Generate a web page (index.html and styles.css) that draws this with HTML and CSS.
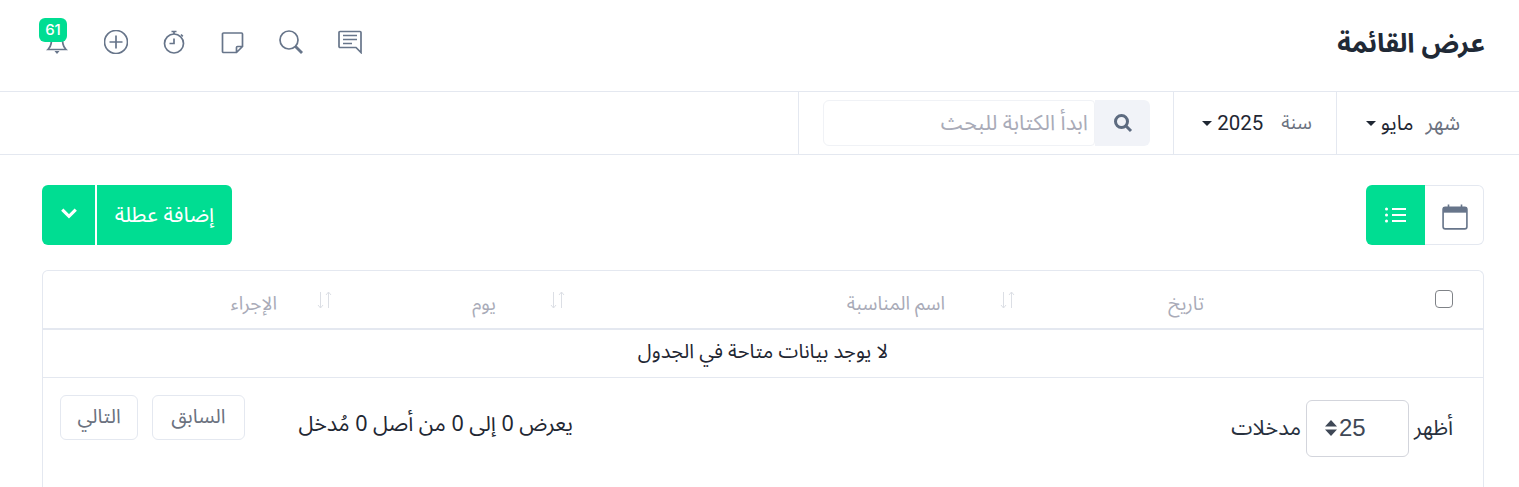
FILE: index.html
```html
<!DOCTYPE html>
<html lang="ar" dir="rtl">
<head>
    <meta charset="UTF-8">
    <meta name="viewport" content="width=device-width, initial-scale=1.0">
    <title>عرض القائمة</title>
    <link rel="stylesheet" href="styles.css">
</head>
<body>
    <header class="top-bar">
        <h1 class="page-title">عرض القائمة</h1>
        <div class="top-icons">
            <svg class="top-icon" viewBox="0 0 24 24"><path d="M2 1.500h20a1 1 0 0 1 1 1v20l-5-5H2a1 1 0 0 1-1-1v-14a1 1 0 0 1 1-1zM5 5.500h14M5 9.500h14M5 13.500h9"/></svg>
            <svg class="top-icon" viewBox="0 0 24 24"><circle cx="10" cy="10" r="9"/><path d="M16.500 16.500l6.500 6.500" class="thick"/></svg>
            <svg class="top-icon" viewBox="0 0 24 24"><path d="M2.500 3h18a1 1 0 0 1 1 1v12.500l-6 6h-13a1 1 0 0 1-1-1V4a1 1 0 0 1 1-1zM21.500 16.500h-5a1 1 0 0 0-1 1v5"/></svg>
            <svg class="top-icon" viewBox="0 0 24 24"><circle cx="12" cy="13.500" r="9.500"/><path d="M9.500 1.500h5M12 1.500V4M19 4.500l1.800 1.800M12 8.500v5H7.500"/></svg>
            <svg class="top-icon" viewBox="0 0 24 24"><circle cx="12" cy="12" r="11.500"/><path d="M12 5.500v13M5.500 12h13"/></svg>
            <span class="bell">
                <svg class="top-icon" viewBox="0 0 24 24"><path d="M7 8l-1 6q-.5 3-3 5.500h18q-2.500-2.500-3-5.500l-1-6"/><path class="solid" d="M9.500 21h5L12 24z"/></svg>
                <span class="bell-badge">61</span>
            </span>
        </div>
    </header>

    <div class="filter-bar">
        <div class="filter-cell filter-month">
            <span class="filter-label">شهر</span>
            <span class="filter-value">مايو</span>
            <span class="caret"></span>
        </div>
        <div class="filter-cell filter-years">
            <span class="filter-label">سنة</span>
            <span class="filter-value filter-year">2025</span>
            <span class="caret"></span>
        </div>
        <div class="filter-cell filter-search">
            <div class="search-addon">
                <svg viewBox="0 0 20 20"><circle cx="8.500" cy="8.500" r="6"/><path d="M13 13l5 5"/></svg>
            </div>
            <input class="search-input" type="text" placeholder="ابدأ الكتابة للبحث">
        </div>
    </div>

    <main class="content">
        <div class="toolbar">
            <div class="view-switch">
                <button class="view-btn">
                    <svg viewBox="0 0 24 24"><rect x="1" y="3" width="22" height="20" rx="2"/><path class="solid" d="M1 3h22v5H1z"/><path d="M6 .5v3M18 .5v3"/></svg>
                </button>
                <button class="view-btn view-btn-active">
                    <svg viewBox="0 0 24 24"><path d="M8 6h14M8 12h14M8 18h14"/><path class="dots" d="M2.500 6h.01M2.500 12h.01M2.500 18h.01"/></svg>
                </button>
            </div>
            <div class="add-group">
                <button class="add-btn">إضافة عطلة</button>
                <button class="add-more">
                    <svg viewBox="0 0 16 16"><path d="M2 5l6 6 6-6"/></svg>
                </button>
            </div>
        </div>

        <section class="table-card">
            <table class="holiday-table">
                <thead>
                    <tr>
                        <th class="col-check"><span class="check-box"></span></th>
                        <th class="col-date"><div class="th-inner">تاريخ<svg class="sort sort-date" viewBox="0 0 15 18"><path d="M3.500 1v16M1 14l2.500 3L6 14M11.500 17V1M9 4l2.500-3L14 4"/></svg></div></th>
                        <th class="col-name"><div class="th-inner">اسم المناسبة<svg class="sort sort-name" viewBox="0 0 15 18"><path d="M3.500 1v16M1 14l2.500 3L6 14M11.500 17V1M9 4l2.500-3L14 4"/></svg></div></th>
                        <th class="col-day"><div class="th-inner">يوم<svg class="sort sort-day" viewBox="0 0 15 18"><path d="M3.500 1v16M1 14l2.500 3L6 14M11.500 17V1M9 4l2.500-3L14 4"/></svg></div></th>
                        <th class="col-action">الإجراء</th>
                    </tr>
                </thead>
                <tbody>
                    <tr>
                        <td colspan="5" class="empty-row">لا يوجد بيانات متاحة في الجدول</td>
                    </tr>
                </tbody>
            </table>
            <div class="table-footer">
                <div class="page-length">
                    <span>أظهر</span>
                    <div class="length-select">
                        <span>25</span>
                        <svg viewBox="0 0 14 16"><path d="M7 0l6 6.500H1zM7 16L1 9.500h12z"/></svg>
                    </div>
                    <span>مدخلات</span>
                </div>
                <div class="footer-side">
                    <span class="table-info">يعرض 0 إلى 0 من أصل 0 مُدخل</span>
                    <div class="pager">
                        <button class="page-btn">السابق</button>
                        <button class="page-btn page-btn-next">التالي</button>
                    </div>
                </div>
            </div>
        </section>
    </main>
</body>
</html>
```

FILE: styles.css
```css
:root {
    --green: #00dd92;
    --line: #e4e8f0;
    --icon: #67758a;
    --dark: #28313e;
    --muted: #a9abb8;
}

html, body {
    height: 100vh;
    overflow: hidden;
}

body {
    margin: 0;
    background: #fff;
    color: var(--dark);
    font-family: "Noto Sans Arabic", "Noto Sans", "DejaVu Sans", sans-serif;
    font-size: 16px;
}

button {
    font-family: inherit;
    cursor: pointer;
}

svg {
    display: block;
}

.top-bar {
    height: 92px;
    box-sizing: border-box;
    padding: 0 34px 0 45px;
    display: flex;
    align-items: center;
    justify-content: space-between;
    border-bottom: 1px solid var(--line);
}

.page-title {
    margin: -3px 0 0;
    font-size: 26.500px;
    font-weight: 700;
    color: #202936;
}

.top-icons {
    display: flex;
    align-items: center;
    gap: 34.500px;
    margin-top: -8px;
}

.top-icon {
    width: 24px;
    height: 24px;
    fill: none;
    stroke: var(--icon);
    stroke-width: 1.700;
}

.top-icon .thick {
    stroke-width: 2.800;
}

.top-icon .solid {
    fill: var(--icon);
    stroke: none;
}

.bell {
    position: relative;
    display: block;
}

.bell-badge {
    position: absolute;
    top: -12px;
    left: -6px;
    width: 28px;
    height: 24px;
    border-radius: 6px;
    background: var(--green);
    color: #fff;
    font-family: Inter, sans-serif;
    font-size: 15px;
    font-weight: 500;
    line-height: 24px;
    text-align: center;
}

.filter-bar {
    height: 63px;
    box-sizing: border-box;
    display: flex;
    border-bottom: 1px solid var(--line);
}

.filter-cell {
    display: flex;
    align-items: center;
    box-sizing: border-box;
    border-left: 1px solid var(--line);
    font-size: 20.500px;
}

.filter-month {
    width: 183px;
    padding-right: 59px;
}

.filter-month .filter-label {
    margin-left: 12px;
}

.filter-years {
    width: 163px;
    padding-right: 24px;
    font-size: 19px;
}

.filter-years .filter-label {
    margin-left: 18px;
}

.filter-label {
    color: #6b7280;
}

.filter-value {
    color: #1f2733;
}

.filter-year {
    font-family: Roboto, sans-serif;
    font-size: 20.500px;
}

.caret {
    width: 0;
    height: 0;
    margin-right: 5px;
    border-top: 5px solid #1f2733;
    border-left: 5px solid transparent;
    border-right: 5px solid transparent;
}

.search-addon {
    width: 55px;
    height: 46px;
    background: #f1f3f8;
    border-radius: 0 6px 6px 0;
    display: flex;
    align-items: center;
    justify-content: center;
}

.search-addon svg {
    width: 20px;
    height: 20px;
    fill: none;
    stroke: #5d6b80;
    stroke-width: 3;
}

.filter-search {
    padding: 0 23px 0 24px;
}

.search-input {
    width: 272px;
    height: 46px;
    box-sizing: border-box;
    margin: 0;
    padding: 0 6px;
    border: 1px solid #f0f2f6;
    border-radius: 6px 4px 4px 6px;
    font-family: inherit;
    font-size: 21.500px;
    outline: none;
}

.search-input::placeholder {
    color: var(--muted);
}

.content {
    padding: 30px 35px 0 42px;
}

.toolbar {
    display: flex;
    justify-content: space-between;
    margin-bottom: 25px;
}

.view-switch {
    display: flex;
    height: 60px;
}

.view-btn {
    width: 59px;
    padding: 0;
    display: flex;
    align-items: center;
    justify-content: center;
    background: #fff;
    border: 1px solid var(--line);
    border-left: 0;
    border-radius: 0 6px 6px 0;
}

.view-btn-active {
    background: var(--green);
    border: 0;
    border-radius: 6px 0 0 6px;
}

.view-btn svg {
    width: 26px;
    height: 26px;
    margin-top: 3px;
    margin-right: -2px;
    fill: none;
    stroke: var(--icon);
    stroke-width: 1.500;
}

.view-btn .solid {
    fill: var(--icon);
    stroke: none;
}

.view-btn-active svg {
    width: 24px;
    height: 24px;
    margin: 0;
    stroke: #fff;
    stroke-width: 1.800;
}

.view-btn-active .dots {
    stroke-width: 3;
    stroke-linecap: round;
}

.add-group {
    display: flex;
    height: 60px;
    gap: 2px;
}

.add-btn, .add-more {
    padding: 0;
    border: 0;
    background: var(--green);
    color: #fff;
}

.add-btn {
    width: 135px;
    border-radius: 0 6px 6px 0;
    font-size: 21.500px;
}

.add-more {
    width: 53px;
    border-radius: 6px 0 0 6px;
    display: flex;
    align-items: center;
    justify-content: center;
}

.add-more svg {
    width: 18px;
    height: 18px;
    margin-top: -5px;
    fill: none;
    stroke: #fff;
    stroke-width: 2.800;
}

.table-card {
    height: calc(100vh - 270px);
    box-sizing: border-box;
    border: 1px solid var(--line);
    border-bottom: 0;
    border-radius: 6px 6px 0 0;
}

.holiday-table {
    width: 100%;
    border-collapse: collapse;
    table-layout: fixed;
}

.holiday-table th {
    height: 58px;
    padding: 8px 16px 0;
    box-sizing: border-box;
    border-bottom: 2px solid var(--line);
    color: var(--muted);
    font-size: 19px;
    font-weight: 400;
    line-height: 26px;
    text-align: right;
}

.col-check { width: 263px; }
.col-date { width: 259px; }
.col-name { width: 449px; }
.col-day { width: 219px; }

.holiday-table th.col-check {
    padding: 0 30px 0 0;
}

.check-box {
    display: block;
    width: 16px;
    height: 16px;
    margin-top: -1px;
    border: 1px solid #7f8287;
    border-radius: 4px;
}

.th-inner {
    display: flex;
    justify-content: space-between;
}

.sort {
    width: 15px;
    height: 18px;
    fill: none;
    stroke: #dcdfe5;
    stroke-width: 1;
}

.sort-date { margin-left: 23px; }
.sort-name { margin-left: 22px; }
.sort-day { margin-left: 8px; }

.empty-row {
    height: 48px;
    padding: 0 0 3px;
    box-sizing: border-box;
    border-bottom: 1px solid var(--line);
    color: #1f2733;
    font-size: 20px;
    line-height: 1;
    text-align: center;
}

.table-footer {
    display: flex;
    justify-content: space-between;
    padding: 22px 30px 0 17px;
}

.page-length {
    display: flex;
    align-items: center;
    gap: 5px;
    margin-bottom: auto;
    font-size: 21.500px;
}

.length-select {
    width: 103px;
    height: 57px;
    box-sizing: border-box;
    padding-left: 17px;
    display: flex;
    align-items: center;
    justify-content: flex-end;
    gap: 1px;
    border: 1px solid #d3d5dc;
    border-radius: 6px;
    color: #3f4856;
    font-family: "Liberation Sans", sans-serif;
    font-size: 24px;
}

.length-select svg {
    width: 14px;
    height: 16px;
    fill: #3f4856;
}

.footer-side {
    display: flex;
    gap: 54px;
    margin-top: -5px;
}

.table-info {
    color: #1f2733;
    font-size: 21.500px;
    line-height: 58px;
}

.pager {
    display: flex;
    gap: 14px;
}

.page-btn {
    height: 45px;
    padding: 0 18px;
    background: #fff;
    border: 1px solid var(--line);
    border-radius: 6px;
    color: #6b7280;
    font-size: 20px;
}

.page-btn-next {
    padding: 0 16.500px;
}
```
